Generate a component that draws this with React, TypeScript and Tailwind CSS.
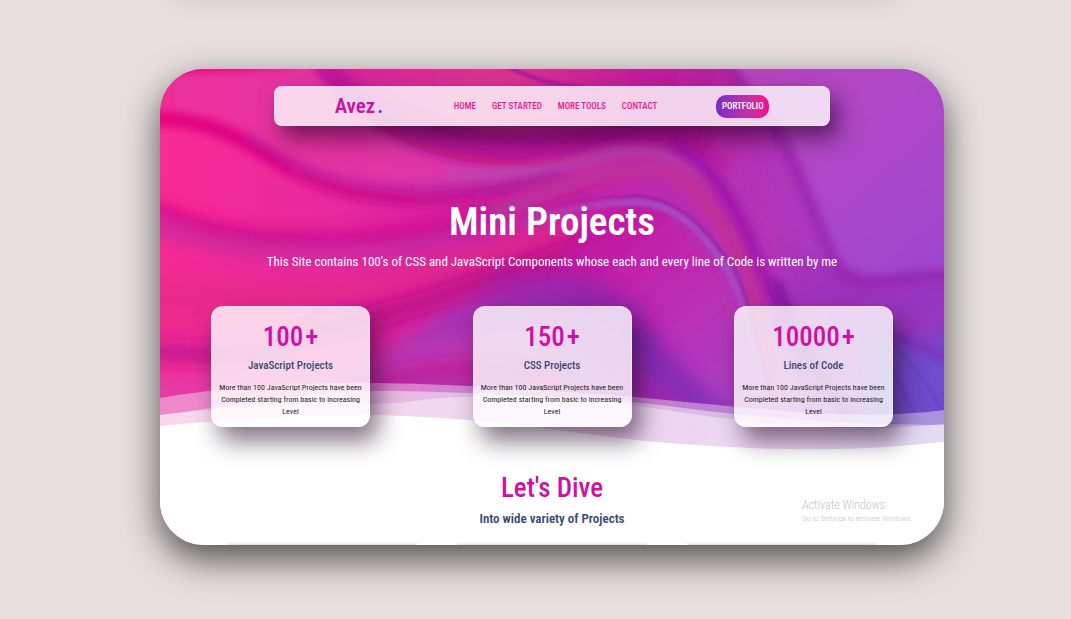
import React from "react";

const links = ["HOME", "GET STARTED", "MORE TOOLS", "CONTACT"];

const stats = [
  { value: "100", label: "JavaScript Projects" },
  { value: "150", label: "CSS Projects" },
  { value: "10000", label: "Lines of Code" },
];

function Backdrop() {
  return (
    <svg
      className="absolute inset-0 -z-10 h-full w-full"
      viewBox="0 0 784 476"
      preserveAspectRatio="none"
      aria-hidden="true"
    >
      <defs>
        <linearGradient id="base" x1="0" y1="0.1" x2="1" y2="0.2">
          <stop offset="0" stopColor="#f92a93" />
          <stop offset="0.25" stopColor="#e6299f" />
          <stop offset="0.5" stopColor="#c81fa2" />
          <stop offset="0.72" stopColor="#b52fb4" />
          <stop offset="1" stopColor="#a04acb" />
        </linearGradient>
        <linearGradient id="upper" x1="0" y1="0" x2="1" y2="0">
          <stop offset="0" stopColor="#f02e96" />
          <stop offset="0.5" stopColor="#e034a4" />
          <stop offset="1" stopColor="#c03cae" />
        </linearGradient>
        <linearGradient id="fold" gradientUnits="userSpaceOnUse" x1="0" y1="0" x2="400" y2="0">
          <stop offset="0" stopColor="#e5007f" />
          <stop offset="0.5" stopColor="#d20a8b" />
          <stop offset="1" stopColor="#b0259f" />
        </linearGradient>
        <linearGradient id="ceiling" gradientUnits="userSpaceOnUse" x1="160" y1="0" x2="600" y2="40">
          <stop offset="0" stopColor="#d8209a" />
          <stop offset="0.4" stopColor="#dc338f" />
          <stop offset="0.75" stopColor="#c01c9a" />
          <stop offset="1" stopColor="#ae2ba6" />
        </linearGradient>
        <linearGradient id="sheet" x1="0" y1="0" x2="1" y2="1">
          <stop offset="0" stopColor="#b844b8" />
          <stop offset="0.5" stopColor="#ae47c7" />
          <stop offset="1" stopColor="#9a45d0" />
        </linearGradient>
        <linearGradient id="lobe" x1="0" y1="1" x2="1" y2="0.3">
          <stop offset="0" stopColor="#cf38ad" />
          <stop offset="0.5" stopColor="#ad35b4" />
          <stop offset="1" stopColor="#8a22ac" />
        </linearGradient>
        <linearGradient id="core" gradientUnits="userSpaceOnUse" x1="400" y1="150" x2="570" y2="350">
          <stop offset="0" stopColor="#c0129a" />
          <stop offset="0.4" stopColor="#c026ae" />
          <stop offset="1" stopColor="#a843c4" />
        </linearGradient>
        <linearGradient id="corner" x1="0" y1="0" x2="1" y2="1">
          <stop offset="0" stopColor="#a62fb6" />
          <stop offset="0.5" stopColor="#9636c0" />
          <stop offset="1" stopColor="#6c4acb" />
        </linearGradient>
        <linearGradient id="arcLight" gradientUnits="userSpaceOnUse" x1="340" y1="0" x2="480" y2="0">
          <stop offset="0" stopColor="#a846c0" stopOpacity="0" />
          <stop offset="1" stopColor="#a846c0" />
        </linearGradient>
        <linearGradient id="arcDark" gradientUnits="userSpaceOnUse" x1="380" y1="0" x2="480" y2="0">
          <stop offset="0" stopColor="#8223b2" stopOpacity="0" />
          <stop offset="1" stopColor="#8223b2" />
        </linearGradient>
        <filter id="b1" filterUnits="userSpaceOnUse" x="-60" y="-60" width="904" height="596"><feGaussianBlur stdDeviation="1.2" /></filter>
        <filter id="b3" filterUnits="userSpaceOnUse" x="-60" y="-60" width="904" height="596"><feGaussianBlur stdDeviation="4" /></filter>
        <filter id="b8" filterUnits="userSpaceOnUse" x="-60" y="-60" width="904" height="596"><feGaussianBlur stdDeviation="9" /></filter>
      </defs>

      <rect width="784" height="476" fill="url(#base)" />

      <g fill="none" strokeLinecap="round" strokeLinejoin="round">
        {/* upper left folds */}
        <path d="M-60 -60H520V70C470 78 440 98 400 104C360 112 330 120 260 118C190 116 150 102 110 78C70 54 40 44-60 44Z" fill="url(#upper)" filter="url(#b3)" />
        <path d="M-10-4C40-4 80-6 130-10" stroke="#e2007c" strokeWidth="14" filter="url(#b3)" />
        <path d="M-30 50C40 46 72 64 110 88C150 114 200 130 260 130C310 129 350 119 400 106" stroke="url(#fold)" strokeWidth="14" filter="url(#b3)" />
        <path d="M90 68C130 100 190 119 260 119C310 118 360 110 420 98" stroke="#a42bab" strokeWidth="6" opacity="0.6" filter="url(#b3)" />
        <path d="M150-10C180 40 240 82 300 92C350 100 400 96 450 84C490 74 540 76 570 106L600-10Z" fill="#b81898" filter="url(#b3)" />
        <path d="M150-30C180 10 230 50 300 58C370 64 430 56 490 50C540 48 580 60 600 90L610-30Z" fill="url(#ceiling)" filter="url(#b8)" />
        <path d="M340-6C370 10 400 18 440 20" stroke="#a91c9c" strokeWidth="4" filter="url(#b1)" />
        <path d="M160-6C168 6 178 16 190 24" stroke="#c8109c" strokeWidth="8" opacity="0.7" filter="url(#b3)" />
        <path d="M210 44C250 78 310 94 370 94C390 94 410 92 430 88" stroke="#cb1c80" strokeWidth="5" opacity="0.8" filter="url(#b1)" />
        <path d="M270 56C330 74 400 74 470 62" stroke="#84107c" strokeWidth="7" opacity="0.6" filter="url(#b3)" />
        <path d="M290 106C360 106 400 98 440 86C470 78 510 78 545 112" stroke="#b34bb0" strokeWidth="10" opacity="0.7" filter="url(#b3)" />

        {/* left lobe and its lower folds */}
        <path d="M-30 130C40 166 110 176 190 170C260 162 320 150 400 124" stroke="#d40a8b" strokeWidth="12" opacity="0.8" filter="url(#b8)" />
        <path d="M-30 124C20 156 80 170 170 172C240 168 300 160 350 146" stroke="#c9108f" strokeWidth="5" opacity="0.7" filter="url(#b3)" />
        <path d="M-10 155C70 184 180 190 260 174C310 164 360 150 410 138" stroke="#b833a5" strokeWidth="15" opacity="0.7" filter="url(#b8)" />
        <path d="M-40 205C60 210 150 215 230 200C300 188 360 160 420 145V170C350 195 280 220 200 240C130 260 60 250-40 260Z" fill="#e52c88" opacity="0.7" filter="url(#b8)" />
        <path d="M150 262C240 246 320 214 390 190C430 176 460 160 490 155" stroke="#bd0d84" strokeWidth="20" filter="url(#b8)" />
        <path d="M-30 280C20 284 60 290 130 280" stroke="#b5168f" strokeWidth="16" opacity="0.9" filter="url(#b8)" />
        <path d="M-40 306H180V360H-40Z" fill="#e63aa6" filter="url(#b8)" />

        {/* central arch */}
        <path d="M390 210C420 158 450 138 480 138C530 146 566 204 598 290C610 330 590 380 560 380H480C480 300 450 230 390 210Z" fill="url(#core)" filter="url(#b3)" />
        <path d="M340 142C390 124 440 98 490 98C534 100 560 148 582 190C596 222 602 262 612 320" stroke="#bd2f9c" strokeWidth="20" filter="url(#b3)" />
        <path d="M330 148C400 130 440 112 490 110C534 114 558 155 578 196M345 132C400 116 440 104 490 104C530 106 552 138 570 176" stroke="#cf2f93" strokeWidth="2" opacity="0.5" filter="url(#b1)" />
        <path d="M370 138C400 130 420 122 440 116" stroke="#a50f91" strokeWidth="1" opacity="0.6" filter="url(#b1)" />
        <path d="M340 160C400 142 440 133 477 133C520 136 546 166 570 206C586 238 594 280 608 340" stroke="url(#arcLight)" strokeWidth="7" filter="url(#b1)" />
        <path d="M380 140C430 129 446 127 477 127C520 129 546 160 575 200C590 232 598 276 612 330" stroke="url(#arcDark)" strokeWidth="2" opacity="0.8" filter="url(#b1)" />
        <path d="M450 146C494 138 530 172 556 214C572 250 584 300 590 340" stroke="#ba3b94" strokeWidth="2" opacity="0.5" filter="url(#b1)" />
        <path d="M516 76C552 98 568 126 586 160C602 196 620 240 660 350" stroke="#980fa6" strokeWidth="12" opacity="0.8" filter="url(#b3)" />
        <path d="M560 70C586 106 604 150 630 214" stroke="#b530b4" strokeWidth="18" filter="url(#b8)" />

        {/* violet lobe */}
        <path d="M170 340C240 262 300 226 370 214C430 206 470 226 500 270C530 306 550 340 556 390H170Z" fill="url(#lobe)" filter="url(#b8)" />
        <path d="M330 216C400 202 450 216 480 252" stroke="#9420a8" strokeWidth="14" opacity="0.7" filter="url(#b8)" />
        <path d="M210 300C260 280 330 260 400 250C420 300 300 310 210 320Z" fill="#c338b1" opacity="0.7" filter="url(#b8)" />
        <path d="M205 320C260 296 340 294 400 316" stroke="#bd1690" strokeWidth="14" opacity="0.9" filter="url(#b8)" />
        <path d="M480 276C500 306 530 320 560 345" stroke="#7c2fb8" strokeWidth="20" opacity="0.8" filter="url(#b8)" />

        {/* right sheets */}
        <path d="M632 170C660 206 720 210 830 195V400H670C650 330 624 260 632 170Z" fill="url(#corner)" filter="url(#b8)" />
        <path d="M562-20C590 20 608 44 617 62C634 90 642 112 651 136C666 172 674 196 686 206C700 214 715 212 735 209C760 205 780 204 830 204" stroke="#8f1ca8" strokeWidth="14" opacity="0.5" filter="url(#b3)" />
        <path d="M558-30C588 20 610 38 623 58C640 85 648 110 657 131C672 165 680 190 692 199C704 206 716 205 730 203C760 198 780 198 830 198V-30Z" fill="url(#sheet)" filter="url(#b3)" />
        <path d="M618 216C632 256 650 300 700 360" stroke="#79129b" strokeWidth="12" opacity="0.8" filter="url(#b3)" />
        <path d="M710 250C740 280 760 280 830 264V370H700Z" fill="#704bcb" filter="url(#b8)" />
        <path d="M716 258C740 272 766 278 800 296" stroke="#8420a8" strokeWidth="4" filter="url(#b3)" />
        <path d="M730 274C756 296 770 320 784 346M700 262C730 290 744 320 756 350" stroke="#6336b2" strokeWidth="2" opacity="0.5" filter="url(#b1)" />
      </g>

      {/* layered waves */}
      <g fill="#ffffff">
        <path d="M0 329C70 317 150 313 220 314C320 316 400 322 475 328C580 338 650 346 710 346C740 345 762 344 784 341V476H0Z" opacity="0.4" />
        <path d="M0 346C90 334 160 320 240 322C330 324 430 328 500 336C590 348 680 356 784 356V476H0Z" opacity="0.45" />
        <path d="M0 346C100 334 160 336 240 334C330 320 430 330 500 340C590 354 680 366 784 355V476H0Z" opacity="0.4" />
        <path d="M0 357C70 350 140 346 210 346C320 348 400 362 475 371C560 379 620 381 680 380C720 379 750 376 784 373V476H0Z" />
      </g>
    </svg>
  );
}

export default function App() {
  return (
    <div className="relative min-h-screen overflow-hidden bg-[#e7dedf] pb-[74px] pl-[45px] pr-3 pt-[69px] font-['Roboto_Condensed','Roboto',sans-serif]">
      <div className="absolute inset-x-[170px] -top-[64px] h-[40px] rounded-[44px] shadow-[0_15px_30px_rgba(0,0,0,0.2)]" />

      <main className="mx-auto w-full max-w-[784px] rounded-[44px] shadow-[0_14px_36px_rgba(0,0,0,0.66)]">
        <div className="relative isolate overflow-hidden rounded-[44px] pt-[17px]">
          <Backdrop />

          <header className="mx-auto flex h-[40px] w-[71%] items-center justify-between rounded-lg border border-white/40 bg-white/80 px-[60px] shadow-[8px_12px_22px_rgba(40,0,40,0.6)]">
            <a href="#home" className="w-[60px] whitespace-nowrap text-[21px] font-semibold leading-7 text-[#c814a0]">
              Avez<span className="pl-0.5 text-[#6a2bc8]">.</span>
            </a>
            <nav className="flex gap-4 whitespace-nowrap text-[9px] font-medium leading-3 text-[#ef1593]">
              {links.map((link) => (
                <a key={link} href="#menu">{link}</a>
              ))}
            </nav>
            <button className="h-[23px] w-[53px] rounded-[10px] bg-gradient-to-r from-[#7c25c8] to-[#f5048a] text-[9px] font-medium leading-3 text-white">
              PORTFOLIO
            </button>
          </header>

          <section className="pt-[70px] text-center text-white">
            <h1 className="text-[39px] font-semibold leading-[52px]">Mini Projects</h1>
            <p className="mt-1 text-[13px] font-normal leading-5">
              This Site contains 100's of CSS and JavaScript Components whose each and every line of Code is written by me
            </p>
          </section>

          <section className="mt-[34px] flex justify-between px-[51px] text-center">
            {stats.map((stat) => (
              <article
                key={stat.label}
                className="h-[121px] w-[159px] rounded-xl border border-white/40 bg-white/80 pt-[14px] shadow-[8px_14px_24px_rgba(30,0,30,0.55)]"
              >
                <h2 className="text-[27px] font-medium leading-8 text-[#cf10a2]">{stat.value}<span className="pl-0.5">+</span></h2>
                <h3 className="mt-[5px] text-[11px] font-medium leading-4 text-[#3a4a70]">{stat.label}</h3>
                <p className="mt-2 text-[8px] leading-3 text-[#222]">
                  More than 100 JavaScript Projects have been Completed starting from basic to increasing Level
                </p>
              </article>
            ))}
          </section>

          <section className="pt-[45px] text-center">
            <h2 className="text-[27px] font-medium leading-8 text-[#cf10a2]">Let's Dive</h2>
            <p className="mt-[5px] text-[13px] font-semibold leading-5 text-[#3a4a70]">Into wide variety of Projects</p>
            <div className="mt-[13px] flex justify-center gap-10">
              {stats.map((stat) => (
                <div key={stat.label} className="h-[3px] w-[190px] bg-gradient-to-t from-[#e0e0e0] to-white" />
              ))}
            </div>
          </section>

          <aside className="absolute bottom-[20px] right-[24px] w-[118px] whitespace-nowrap text-[#c4c4c4]">
            <p className="text-[12px] font-light leading-4">Activate Windows</p>
            <p className="text-[8px] font-light leading-3">Go to Settings to activate Windows.</p>
          </aside>
        </div>
      </main>
    </div>
  );
}
